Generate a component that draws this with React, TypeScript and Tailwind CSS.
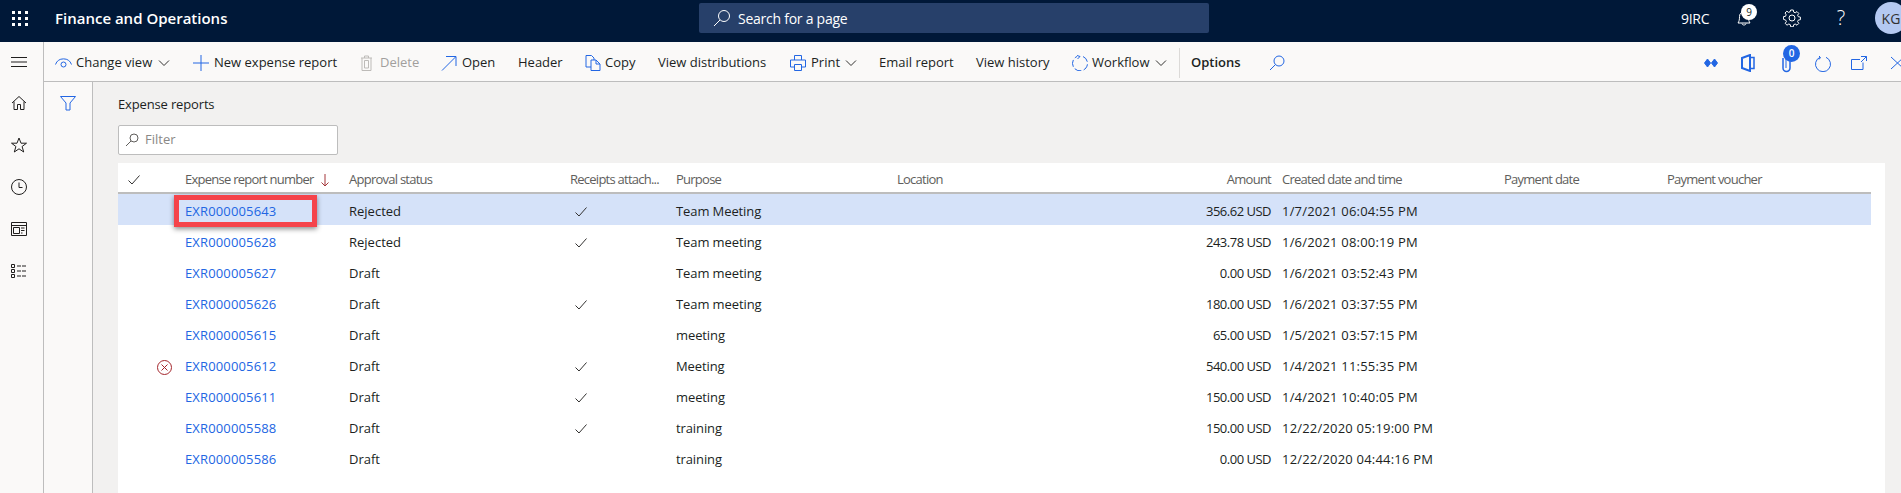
import React from "react";

const B = "#2266e3";
type S = { children: React.ReactNode; w?: number; h?: number; c?: string; sw?: number };
const Ic = ({ children, w = 16, h = 16, c = B, sw = 1 }: S) => (
  <svg width={w} height={h} viewBox={`0 0 ${w} ${h}`} fill="none" stroke={c} strokeWidth={sw} className="shrink-0">
    {children}
  </svg>
);
const Chev = () => (
  <Ic w={12} h={8} c="#323130">
    <path d="M1 1.500 6 6.500 11 1.500" />
  </Ic>
);

const rows = [
  ["EXR000005643", "Rejected", true, "Team Meeting", "356.62 USD", "1/7/2021 06:04:55 PM"],
  ["EXR000005628", "Rejected", true, "Team meeting", "243.78 USD", "1/6/2021 08:00:19 PM"],
  ["EXR000005627", "Draft", false, "Team meeting", "0.00 USD", "1/6/2021 03:52:43 PM"],
  ["EXR000005626", "Draft", true, "Team meeting", "180.00 USD", "1/6/2021 03:37:55 PM"],
  ["EXR000005615", "Draft", false, "meeting", "65.00 USD", "1/5/2021 03:57:15 PM"],
  ["EXR000005612", "Draft", true, "Meeting", "540.00 USD", "1/4/2021 11:55:35 PM"],
  ["EXR000005611", "Draft", true, "meeting", "150.00 USD", "1/4/2021 10:40:05 PM"],
  ["EXR000005588", "Draft", true, "training", "150.00 USD", "12/22/2020 05:19:00 PM"],
  ["EXR000005586", "Draft", false, "training", "0.00 USD", "12/22/2020 04:44:16 PM"],
] as const;

const grid =
  "grid grid-cols-[34px_33px_164px_221px_106px_221px_274px_100px_233px_163px_204px] items-center";

const Check = () => (
  <Ic w={14} h={12} c="#323130">
    <path d="M1.500 6.500 5 10 12.500 1.500" />
  </Ic>
);

const Rail = ({ children }: { children: React.ReactNode }) => (
  <div className="flex h-[42px] w-full items-center justify-center">{children}</div>
);

export default function App() {
  return (
    <div className="flex h-[493px] w-[1901px] flex-col overflow-hidden bg-[#faf9f8] font-['Open_Sans',sans-serif] text-[13px] text-[#201f1e]">
      <header className="flex h-[42px] shrink-0 items-center overflow-hidden bg-[#001838] pb-[6px] text-white">
        <div className="ml-[12px] grid w-[16px] shrink-0 grid-cols-3 gap-[3px]">
          {Array.from({ length: 9 }).map((_, i) => (
            <span key={i} className="h-[3px] w-[3px] bg-white" />
          ))}
        </div>
        <span className="ml-[27px] w-[644px] shrink-0 text-[15px] font-semibold">Finance and Operations</span>
        <div className="flex h-[30px] w-[510px] shrink-0 items-center rounded-[2px] bg-[#27406a] pl-[14px]">
          <Ic w={18} h={18} c="#ffffff">
            <circle cx="11" cy="7" r="5.500" />
            <path d="M7 11 1 17" />
          </Ic>
          <span className="ml-[7px] text-[14px] tracking-[-0.25px]">Search for a page</span>
        </div>
        <span className="ml-[472px] w-[30px] shrink-0 text-[14px] tracking-[-0.3px]">9IRC</span>
        <div className="relative ml-[23px] flex w-[20px] shrink-0 justify-center">
          <Ic w={16} h={18} c="#ffffff">
            <path d="M2 14c1-1.500 1.500-3 1.500-6.500C3.500 4.500 5.500 3 8 3s4.500 1.500 4.500 4.500c0 3.500.5 5 1.500 6.500zM6 14.500c0 2 4 2 4 0" />
          </Ic>
          <span className="absolute -top-[5px] left-[7px] flex h-[16px] w-[16px] items-center justify-center rounded-full bg-white text-[10px] text-[#201f1e]">
            9
          </span>
        </div>
        <div className="ml-[28px] flex w-[20px] shrink-0 justify-center">
          <Ic w={18} h={18} c="#ffffff">
            <path d="M7.700 1h2.600l.4 2.100 1.500.7 1.800-1.200 1.800 1.800-1.200 1.800.7 1.500 2.100.4v2.600l-2.100.4-.7 1.500 1.200 1.800-1.800 1.800-1.800-1.200-1.500.7-.4 2.100H7.700l-.4-2.100-1.500-.7-1.800 1.200-1.800-1.800 1.200-1.800-.7-1.500L.4 10.300V7.700l2.100-.4.7-1.500L2 4 3.800 2.200l1.800 1.200 1.500-.7z" />
            <circle cx="9" cy="9" r="3" />
          </Ic>
        </div>
        <span className="ml-[29px] flex w-[20px] shrink-0 justify-center text-[20px] font-light">?</span>
        <div className="ml-[24px] flex h-[32px] w-[32px] shrink-0 items-center justify-center rounded-full bg-[#b4c9f2] text-[14px] text-[#323130]">
          KG
        </div>
      </header>

      <div className="flex min-h-0 flex-1">
        <aside className="flex w-[44px] shrink-0 flex-col border-r border-[#bdbdbd] pr-[5px]">
          <div className="flex h-[40px] items-center justify-center">
            <Ic w={16} h={12} c="#201f1e">
              <path d="M0 1.500h16M0 6h16M0 10.500h16" />
            </Ic>
          </div>
          <Rail>
            <Ic c="#201f1e">
              <path d="M1 8 8 1.500 15 8M3 6.500V14.500H6.500V9.500H9.500V14.500H13V6.500" />
            </Ic>
          </Rail>
          <Rail>
            <Ic c="#201f1e">
              <path d="M8 1 10 6.200H15.500L11.100 9.500 12.700 15 8 11.800 3.300 15 4.900 9.500.5 6.200H6z" />
            </Ic>
          </Rail>
          <Rail>
            <Ic c="#201f1e">
              <circle cx="8" cy="8" r="7.500" />
              <path d="M8 3.500V8.500H11.500" />
            </Ic>
          </Rail>
          <Rail>
            <Ic h={14} c="#201f1e">
              <path d="M.5.5h15v13H.5zM.5 3.500h15M2.500 5.500h6v6h-6zM10 6h3.500M10 8.500h3.500M10 11h1.500" />
            </Ic>
          </Rail>
          <Rail>
            <Ic h={14} c="#201f1e">
              <path d="M.5.5h3v3h-3zM.5 5.500h3v3h-3zM.5 10.500h3v3h-3z" />
              <path d="M6 2h10M6 7h10M6 12h10" strokeDasharray="4 1" />
            </Ic>
          </Rail>
        </aside>

        <div className="flex min-w-0 flex-1 flex-col">
          <nav className="flex h-[40px] shrink-0 items-center border-b border-[#bdbdbd] pl-[11px] pt-[3px] text-[#201f1e]">
            <div className="flex w-[138px] shrink-0 items-center">
              <Ic w={17} h={12}>
                <path d="M.5 7.500a8.500 8.500 0 0 1 16 0" />
                <circle cx="8.500" cy="7.500" r="2.500" />
              </Ic>
              <span className="ml-[4px]">Change view</span>
              <span className="ml-[6px] flex"><Chev /></span>
            </div>
            <div className="flex w-[167px] shrink-0 items-center">
              <Ic>
                <path d="M8 0V16M0 8H16" />
              </Ic>
              <span className="ml-[5px]">New expense report</span>
            </div>
            <div className="flex w-[81px] shrink-0 items-center text-[#a19f9d]">
              <Ic w={13} c="#bdbbb8">
                <path d="M1 3h11M4.500 3V1h4v2M2 3v12.500h9V3M4.500 5.500v7.500h4V5.500z" />
              </Ic>
              <span className="ml-[7px]">Delete</span>
            </div>
            <div className="flex w-[77px] shrink-0 items-center">
              <Ic>
                <path d="M1 15.500 14.500 2M5 1.500H15V11" />
              </Ic>
              <span className="ml-[5px]">Open</span>
            </div>
            <div className="w-[67px] shrink-0">Header</div>
            <div className="flex w-[73px] shrink-0 items-center">
              <Ic>
                <path d="M6 12H1V.5H6.500L9 3V5M6 5H11L15 9V15.500H6zM11 5V9H15" />
              </Ic>
              <span className="ml-[4px]">Copy</span>
            </div>
            <div className="w-[132px] shrink-0">View distributions</div>
            <div className="flex w-[89px] shrink-0 items-center">
              <Ic>
                <path d="M4.500 5V.5h7V5M4 12H.5V5h15v7H12M4.500 9.500h7v6h-7z" />
              </Ic>
              <span className="ml-[5px]">Print</span>
              <span className="ml-[5px] flex"><Chev /></span>
            </div>
            <div className="w-[97px] shrink-0">Email report</div>
            <div className="w-[96px] shrink-0">View history</div>
            <div className="flex w-[107px] shrink-0 items-center">
              <Ic>
                <path d="M11 1.500A7.500 7.500 0 1 1 5 1.500" strokeDasharray="7 2.500" />
                <path d="M5 .5 8 1.500 5.500 4" />
              </Ic>
              <span className="ml-[4px]">Workflow</span>
              <span className="ml-[5px] flex"><Chev /></span>
            </div>
            <div className="h-[30px] w-px shrink-0 bg-[#dcdad8]" />
            <div className="ml-[11px] w-[78px] shrink-0 font-semibold">Options</div>
            <Ic>
              <circle cx="10" cy="6" r="5" />
              <path d="M6.500 9.500 1 15" />
            </Ic>
            <div className="ml-auto flex items-center">
              <Ic w={14} h={10}>
                <path d="M3.500 1 6.500 5 3.500 9 .5 5zM10.500 1 13.500 5 10.500 9 7.500 5z" fill={B} />
              </Ic>
              <div className="ml-[23px] flex">
                <Ic w={14} h={18}>
                  <path d="M1 4 9 1V17L1 14z" strokeWidth="2" />
                  <path d="M9 3.500H13V14.500H9" strokeWidth="1.500" />
                </Ic>
              </div>
              <div className="relative ml-[26px] flex">
                <Ic w={11} h={20}>
                  <path d="M2 5V15a3.500 3.500 0 0 0 7 0V4" strokeWidth="1.500" />
                  <path d="M5 4V15" />
                </Ic>
                <span className="absolute -top-[8px] left-[2px] flex h-[17px] w-[17px] items-center justify-center rounded-full bg-[#2266e3] text-[10px] font-semibold text-white">
                  0
                </span>
              </div>
              <div className="ml-[23px] flex">
                <Ic h={17}>
                  <path d="M11 2.300a7.500 7.500 0 1 1-6 0M4 1 5.500 2.500 4 4.500" />
                </Ic>
              </div>
              <div className="ml-[20px] flex">
                <Ic h={14}>
                  <path d="M12 6.500V13.500H.5V3.500H9M10 .5H15.500V5M15.500.5 10 6" />
                </Ic>
              </div>
              <div className="ml-[23px] w-[11px] overflow-hidden">
                <Ic h={14}>
                  <path d="M1 1 14 13M14 1 1 13" />
                </Ic>
              </div>
            </div>
          </nav>

          <div className="flex min-h-0 flex-1">
            <div className="flex w-[49px] shrink-0 justify-center border-r border-[#bdbdbd] pt-[14px]">
              <Ic w={16} h={15}>
                <path d="M.5.500h15L10 7V14H6V7z" />
              </Ic>
            </div>
            <main className="min-w-0 flex-1 bg-[#f2f1f0] pl-[25px] pr-[16px]">
              <div className="flex h-[81px] flex-col">
                <div className="mt-[13px] text-[13px] tracking-[-0.15px]">Expense reports</div>
                <div className="mt-[10px] flex h-[30px] w-[220px] items-center rounded-[2px] border border-[#bdbdbd] bg-white pl-[6px] text-[#8a8886]">
                  <Ic w={14} h={14} c="#605e5c">
                    <circle cx="9" cy="5" r="4" />
                    <path d="M6 8 1 13" />
                  </Ic>
                  <span className="ml-[6px]">Filter</span>
                </div>
              </div>
              <section className="h-full bg-white pr-[14px]">
                <div className={`${grid} h-[31px] border-b-2 border-[#bdbdbd] pt-[5px] tracking-[-0.75px] text-[#605e5c]`}>
                  <div className="pl-[9px]"><Check /></div>
                  <div />
                  <div className="flex items-center">
                    <span>Expense report number</span>
                    <svg width="8" height="13" viewBox="0 0 8 13" fill="none" stroke="#a4373a" strokeWidth="1" className="ml-[7px]">
                      <path d="M4 0V12M.5 8.500 4 12 7.500 8.500" />
                    </svg>
                  </div>
                  <div>Approval status</div>
                  <div className="whitespace-nowrap">Receipts attach...</div>
                  <div>Purpose</div>
                  <div>Location</div>
                  <div className="text-right">Amount</div>
                  <div className="pl-[11px]">Created date and time</div>
                  <div>Payment date</div>
                  <div>Payment voucher</div>
                </div>
                {rows.map((r, i) => (
                  <div key={r[0]} className={`${grid} relative h-[31px] pt-[5px] ${i === 0 ? "bg-[#d5e2f9]" : ""}`}>
                    <div />
                    <div className="flex justify-center pr-[9px]">
                      {i === 5 && (
                        <Ic w={15} h={15} c="#a4262c">
                          <circle cx="7.500" cy="7.500" r="7" />
                          <path d="M4.500 4.500 10.500 10.500M10.500 4.500 4.500 10.500" />
                        </Ic>
                      )}
                    </div>
                    <div className="tracking-[0.15px] text-[#2266e3]">{r[0]}</div>
                    <div>{r[1]}</div>
                    <div className="pl-[4px]">{r[2] && <Check />}</div>
                    <div className="tracking-[-0.1px]">{r[3]}</div>
                    <div />
                    <div className="text-right tracking-[-0.5px]">{r[4]}</div>
                    <div className="whitespace-nowrap pl-[11px] tracking-[0.2px]">{r[5]}</div>
                    <div />
                    <div />
                    {i === 0 && (
                      <div className="absolute left-[56px] top-[1px] h-[32px] w-[143px] border-[5px] border-[#f5434a] shadow-[0_2px_5px_rgba(0,0,0,0.45)]" />
                    )}
                  </div>
                ))}
              </section>
            </main>
          </div>
        </div>
      </div>
    </div>
  );
}
